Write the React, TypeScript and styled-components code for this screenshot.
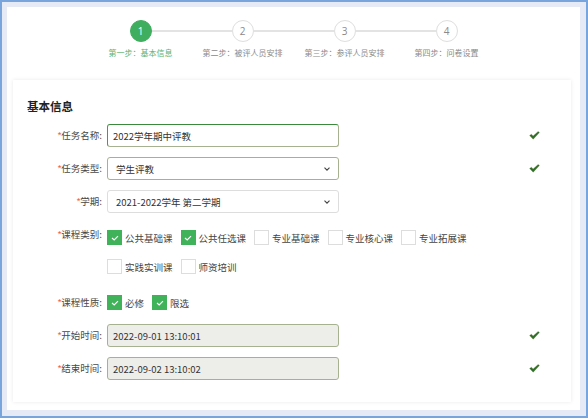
import React from "react";
import styled, { createGlobalStyle } from "styled-components";

const Global = createGlobalStyle`
  html, body { margin: 0; padding: 0; }
  body {
    font-family: "Noto Sans CJK SC", "Noto Sans", sans-serif;
    background: #e6eaf6;
  }
  * { box-sizing: border-box; }
`;

const Frame = styled.div`
  width: 588px;
  height: 418px;
  border: 2px solid #78a6dc;
  background: #e6eaf6;
  padding: 5px 6px 6px 5px;
`;

const Panel = styled.div`
  height: 100%;
  background: #ffffff;
  padding: 13px 9px 8px 6px;
  display: flex;
  flex-direction: column;
`;

const Steps = styled.div`
  display: flex;
  justify-content: center;
  height: 60px;
  padding-left: 3px;
`;

const Step = styled.div`
  width: 102px;
  display: flex;
  flex-direction: column;
  align-items: center;
`;

const Track = styled.div`
  width: 100%;
  display: flex;
  align-items: center;
`;

const Seg = styled.div<{ $hidden?: boolean }>`
  flex: 1;
  height: 2px;
  background: ${(p) => (p.$hidden ? "transparent" : "#e3e3e3")};
`;

const Circle = styled.div<{ $active?: boolean }>`
  width: 22px;
  height: 22px;
  border-radius: 50%;
  border: 1px solid ${(p) => (p.$active ? "#3fae5f" : "#dedede")};
  background: ${(p) => (p.$active ? "#3fae5f" : "#fff")};
  color: ${(p) => (p.$active ? "#fff" : "#8a8a8a")};
  font-family: "Open Sans", "Noto Sans", sans-serif;
  font-size: 10px;
  display: flex;
  align-items: center;
  justify-content: center;
`;

const StepLabel = styled.div<{ $active?: boolean }>`
  margin-top: 5px;
  font-size: 8px;
  line-height: 11px;
  white-space: nowrap;
  color: ${(p) => (p.$active ? "#5cb26e" : "#8a8a8a")};
`;

const Card = styled.div`
  flex: 1;
  background: #fff;
  box-shadow: 0 0 4px rgba(0, 0, 0, 0.09);
  padding: 18px 14px 0 14px;
  display: flex;
  flex-direction: column;
`;

const Title = styled.div`
  font-size: 11.5px;
  font-weight: 700;
  line-height: 16px;
  color: #222;
  margin-bottom: 10px;
`;

const Form = styled.div`
  display: flex;
  flex-direction: column;
  gap: 10px;
`;

const Row = styled.div`
  display: grid;
  grid-template-columns: 75px 232px 1fr 28px;
  column-gap: 5px;
  align-items: center;
`;

const Label = styled.div<{ $top?: boolean }>`
  height: 23px;
  overflow: hidden;
  text-align: right;
  font-size: 9.5px;
  line-height: 23px;
  color: #484848;
  white-space: nowrap;
  align-self: ${(p) => (p.$top ? "start" : "center")};
`;

const Star = styled.span`
  color: #ec5a36;
  font-size: 9.5px;
  font-family: "Liberation Sans", sans-serif;
  line-height: 0;
  vertical-align: 1px;
`;

const Input = styled.div<{ $tone?: "focus" | "ok" | "plain" | "disabled" }>`
  height: 23px;
  border-radius: 3px;
  border: 1px solid
    ${(p) => (p.$tone === "plain" ? "#dddddd" : "#a6b28f")};
  ${(p) => (p.$tone === "focus" ? "border-top-color: #3b8a3b; border-left-color: #5d8f4f;" : "")}
  background: ${(p) => (p.$tone === "disabled" ? "#ededea" : "#fff")};
  font-size: 9.5px;
  color: #333;
  display: flex;
  align-items: center;
  justify-content: space-between;
  padding: 0 8px 0 5px;
  white-space: nowrap;
`;

const SelectText = styled.span`
  padding-left: 3px;
`;

const Chevron = styled.svg`
  width: 6px;
  height: 4px;
`;

const Tick = styled.svg`
  width: 11px;
  height: 9px;
  justify-self: start;
`;

const Group = styled.div<{ $wrap?: boolean }>`
  grid-column: 2 / span 2;
  display: flex;
  flex-wrap: wrap;
  max-width: ${(p) => (p.$wrap ? "400px" : "none")};
  column-gap: 8px;
`;

const Item = styled.label<{ $h: number }>`
  display: flex;
  align-items: center;
  height: ${(p) => p.$h}px;
  font-size: 9.5px;
  color: #444;
  white-space: nowrap;
`;

const Box = styled.span<{ $on?: boolean }>`
  width: 15px;
  height: 15px;
  margin-right: 3px;
  border: 1px solid ${(p) => (p.$on ? "#3fb25a" : "#dddddd")};
  background: ${(p) => (p.$on ? "#3fb25a" : "#fff")};
  display: flex;
  align-items: center;
  justify-content: center;
`;

const BoxTick = () => (
  <svg width="8" height="6" viewBox="0 0 8 6">
    <path d="M1 3 L3.2 5 L7 1.2" fill="none" stroke="#fff" strokeWidth="1.2" />
  </svg>
);

const OkTick = () => (
  <Tick viewBox="0 0 11 9">
    <path
      d="M0.6 4.6 L2.4 3.2 L4.1 5 L9.2 0.4 L10.4 1.6 L4.2 8.2 Z"
      fill="#2f6e2c"
      stroke="#5b7a1e"
      strokeWidth="0.3"
    />
  </Tick>
);

const Arrow = () => (
  <Chevron viewBox="0 0 6 4">
    <path d="M0.5 0.6 L3 3.2 L5.5 0.6" fill="none" stroke="#444" strokeWidth="1.1" />
  </Chevron>
);

const steps = ["第一步：基本信息", "第二步：被评人员安排", "第三步：参评人员安排", "第四步：问卷设置"];

const courseTypes: [string, boolean][] = [
  ["公共基础课", true],
  ["公共任选课", true],
  ["专业基础课", false],
  ["专业核心课", false],
  ["专业拓展课", false],
  ["实践实训课", false],
  ["师资培训", false],
];

export default function App() {
  return (
    <>
      <Global />
      <Frame>
        <Panel>
          <Steps>
            {steps.map((s, i) => (
              <Step key={s}>
                <Track>
                  <Seg $hidden={i === 0} />
                  <Circle $active={i === 0}>{i + 1}</Circle>
                  <Seg $hidden={i === steps.length - 1} />
                </Track>
                <StepLabel $active={i === 0}>{s}</StepLabel>
              </Step>
            ))}
          </Steps>
          <Card>
            <Title>基本信息</Title>
            <Form>
              <Row>
                <Label><Star>*</Star>任务名称:</Label>
                <Input $tone="focus">2022学年期中评教</Input>
                <span />
                <OkTick />
              </Row>
              <Row>
                <Label><Star>*</Star>任务类型:</Label>
                <Input $tone="ok">
                  <SelectText>学生评教</SelectText>
                  <Arrow />
                </Input>
                <span />
                <OkTick />
              </Row>
              <Row>
                <Label><Star>*</Star>学期:</Label>
                <Input $tone="plain">
                  <SelectText>2021-2022学年 第二学期</SelectText>
                  <Arrow />
                </Input>
              </Row>
              <Row>
                <Label $top><Star>*</Star>课程类别:</Label>
                <Group $wrap>
                  {courseTypes.map(([t, on]) => (
                    <Item key={t} $h={29}>
                      <Box $on={on}>{on && <BoxTick />}</Box>
                      {t}
                    </Item>
                  ))}
                </Group>
              </Row>
              <Row>
                <Label><Star>*</Star>课程性质:</Label>
                <Group>
                  <Item $h={23}>
                    <Box $on><BoxTick /></Box>必修
                  </Item>
                  <Item $h={23}>
                    <Box $on><BoxTick /></Box>限选
                  </Item>
                </Group>
              </Row>
              <Row>
                <Label><Star>*</Star>开始时间:</Label>
                <Input $tone="disabled">2022-09-01 13:10:01</Input>
                <span />
                <OkTick />
              </Row>
              <Row>
                <Label><Star>*</Star>结束时间:</Label>
                <Input $tone="disabled">2022-09-02 13:10:02</Input>
                <span />
                <OkTick />
              </Row>
            </Form>
          </Card>
        </Panel>
      </Frame>
    </>
  );
}
